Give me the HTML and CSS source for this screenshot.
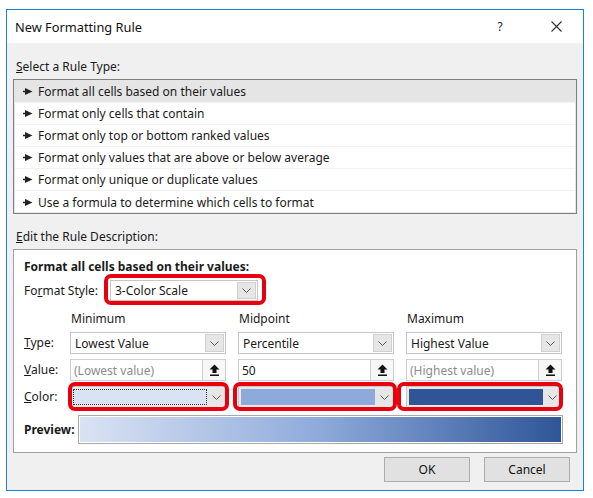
FILE: index.html
```html
<!DOCTYPE html>
<html>
<head>
<meta charset="utf-8">
<link rel="stylesheet" href="styles.css">
</head>
<body>
<div class="dialog">
  <div class="titlebar">
    <span class="title">New Formatting Rule</span>
    <span class="help">?</span>
    <span class="close"><svg width="11" height="11" viewBox="0 0 11 11"><path d="M0.5 0.5 L10.5 10.5 M10.5 0.5 L0.5 10.5" stroke="#333" stroke-width="1.1" fill="none"/></svg></span>
  </div>
  <div class="content">
    <div class="section-label first"><u>S</u>elect a Rule Type:</div>
    <ul class="rule-list">
      <li class="selected"><svg class="ptr" width="10" height="7" viewBox="0 0 10 7"><path d="M0 2.8 H2 V0 L9.5 3.5 L2 7 V4.2 H0 Z" fill="#222"/></svg>Format all cells based on their values</li>
      <li><svg class="ptr" width="10" height="7" viewBox="0 0 10 7"><path d="M0 2.8 H2 V0 L9.5 3.5 L2 7 V4.2 H0 Z" fill="#222"/></svg>Format only cells that contain</li>
      <li><svg class="ptr" width="10" height="7" viewBox="0 0 10 7"><path d="M0 2.8 H2 V0 L9.5 3.5 L2 7 V4.2 H0 Z" fill="#222"/></svg>Format only top or bottom ranked values</li>
      <li><svg class="ptr" width="10" height="7" viewBox="0 0 10 7"><path d="M0 2.8 H2 V0 L9.5 3.5 L2 7 V4.2 H0 Z" fill="#222"/></svg>Format only values that are above or below average</li>
      <li><svg class="ptr" width="10" height="7" viewBox="0 0 10 7"><path d="M0 2.8 H2 V0 L9.5 3.5 L2 7 V4.2 H0 Z" fill="#222"/></svg>Format only unique or duplicate values</li>
      <li><svg class="ptr" width="10" height="7" viewBox="0 0 10 7"><path d="M0 2.8 H2 V0 L9.5 3.5 L2 7 V4.2 H0 Z" fill="#222"/></svg>Use a formula to determine which cells to format</li>
    </ul>
    <div class="section-label second"><u>E</u>dit the Rule Description:</div>
    <div class="desc">
      <div class="desc-title">Format all cells based on their values:</div>
      <div class="style-row">
        <span class="style-label">Fo<u>r</u>mat Style:</span>
        <div class="marked mark-style">
          <div class="combo style-combo">
            <span class="combo-text">3-Color Scale</span>
            <span class="arrow"><svg width="9" height="5" viewBox="0 0 9 5"><path d="M0.5 0.5 L4.5 4.5 L8.5 0.5" stroke="#555" stroke-width="1" fill="none"/></svg></span>
          </div>
        </div>
      </div>
      <div class="grid">
        <span></span>
        <span class="col-head">Minimum</span>
        <span class="col-head">Midpoint</span>
        <span class="col-head">Maximum</span>

        <span class="row-label"><u>T</u>ype:</span>
        <div class="combo"><span class="combo-text">Lowest Value</span><span class="arrow"><svg width="9" height="5" viewBox="0 0 9 5"><path d="M0.5 0.5 L4.5 4.5 L8.5 0.5" stroke="#555" stroke-width="1" fill="none"/></svg></span></div>
        <div class="combo"><span class="combo-text">Percentile</span><span class="arrow"><svg width="9" height="5" viewBox="0 0 9 5"><path d="M0.5 0.5 L4.5 4.5 L8.5 0.5" stroke="#555" stroke-width="1" fill="none"/></svg></span></div>
        <div class="combo"><span class="combo-text">Highest Value</span><span class="arrow"><svg width="9" height="5" viewBox="0 0 9 5"><path d="M0.5 0.5 L4.5 4.5 L8.5 0.5" stroke="#555" stroke-width="1" fill="none"/></svg></span></div>

        <span class="row-label"><u>V</u>alue:</span>
        <div class="input"><span class="input-text muted">(Lowest value)</span><span class="upload"><svg width="11" height="12" viewBox="0 0 11 12"><path d="M5.5 0.5 L10.5 5.5 H7.5 V9 H3.5 V5.5 H0.5 Z" fill="#111"/><rect x="1" y="10.5" width="9" height="1.5" fill="#111"/></svg></span></div>
        <div class="input"><span class="input-text">50</span><span class="upload"><svg width="11" height="12" viewBox="0 0 11 12"><path d="M5.5 0.5 L10.5 5.5 H7.5 V9 H3.5 V5.5 H0.5 Z" fill="#111"/><rect x="1" y="10.5" width="9" height="1.5" fill="#111"/></svg></span></div>
        <div class="input"><span class="input-text muted">(Highest value)</span><span class="upload"><svg width="11" height="12" viewBox="0 0 11 12"><path d="M5.5 0.5 L10.5 5.5 H7.5 V9 H3.5 V5.5 H0.5 Z" fill="#111"/><rect x="1" y="10.5" width="9" height="1.5" fill="#111"/></svg></span></div>

        <span class="row-label"><u>C</u>olor:</span>
        <div class="marked mark-min"><div class="color-combo"><span class="swatch swatch-min"></span><span class="arrow flat"><svg width="9" height="5" viewBox="0 0 9 5"><path d="M0.5 0.5 L4.5 4.5 L8.5 0.5" stroke="#555" stroke-width="1" fill="none"/></svg></span></div></div>
        <div class="marked mark-mid"><div class="color-combo"><span class="swatch swatch-mid"></span><span class="arrow flat"><svg width="9" height="5" viewBox="0 0 9 5"><path d="M0.5 0.5 L4.5 4.5 L8.5 0.5" stroke="#555" stroke-width="1" fill="none"/></svg></span></div></div>
        <div class="marked mark-max"><div class="color-combo"><span class="swatch swatch-max"></span><span class="arrow flat"><svg width="9" height="5" viewBox="0 0 9 5"><path d="M0.5 0.5 L4.5 4.5 L8.5 0.5" stroke="#555" stroke-width="1" fill="none"/></svg></span></div></div>
      </div>
      <div class="preview-row">
        <span class="preview-label">Preview:</span>
        <div class="preview-bar"></div>
      </div>
    </div>
    <div class="buttons">
      <button class="btn">OK</button>
      <button class="btn">Cancel</button>
    </div>
  </div>
</div>
</body>
</html>
```

FILE: styles.css
```css
* { box-sizing: border-box; }
html, body { margin: 0; padding: 0; background: #fff; }
body {
  font-family: "Noto Sans", "Open Sans", sans-serif;
  font-size: 12px;
  color: #1a1a1a;
}
u { text-decoration: underline; text-underline-offset: 1px; }

.dialog {
  margin: 9px 0 0 6px;
  width: 578px;
  height: 482px;
  border: 1px solid #1883d7;
  background: #f0f0f0;
  display: flex;
  flex-direction: column;
}

.titlebar {
  height: 33px;
  flex: none;
  background: #fff;
  display: flex;
  align-items: center;
  padding-left: 8px;
}
.title { font-size: 12.8px; color: #111; }
.help { margin-left: auto; width: 20px; text-align: center; font-size: 12px; color: #222; }
.close { width: 54px; height: 33px; display: flex; align-items: center; justify-content: center; margin-left: 19px; margin-right: 0; }

.content { padding: 0 6px; display: flex; flex-direction: column; }

.section-label { height: 16px; line-height: 16px; padding-left: 3px; }
.section-label.first { margin-top: 16px; margin-bottom: 4px; }
.section-label.second { margin-top: 15px; margin-bottom: 4px; }

.rule-list {
  list-style: none;
  margin: 0;
  padding: 1px 1px 0;
  background: #fff;
  border: 1px solid #7f7f7f;
  box-shadow: inset 0 0 0 1px #e6e6e6;
}
.rule-list li {
  height: 22px;
  display: flex;
  align-items: center;
  padding-left: 8px;
  border-bottom: 1px solid #f2f2f2;
}
.rule-list li:last-child { border-bottom: none; }
.rule-list li.selected { background: #e5e5e5; }
.ptr { margin-right: 5px; flex: none; }

.desc {
  height: 204px;
  background: #fff;
  border: 1px solid #a0a0a0;
  padding: 9px 10px 0 10px;
}
.desc-title { font-weight: bold; height: 16px; line-height: 16px; }

.style-row { display: flex; align-items: center; margin-top: 5px; height: 21px; }
.style-label { width: 86px; }

.marked { position: relative; }
.marked::after {
  content: "";
  position: absolute;
  border: 4px solid #e8000f;
  border-radius: 7px;
  pointer-events: none;
}
.mark-style::after { left: -6px; right: -8px; top: -6px; bottom: -4px; }
.mark-min::after { left: -2px; right: -3px; top: -4px; bottom: -3px; }
.mark-mid::after { left: -5px; right: -3px; top: -4px; bottom: -3px; }
.mark-max::after { left: -9px; right: -1px; top: -4px; bottom: -3px; }

.combo {
  height: 22px;
  border: 1px solid #c6c6c6;
  background: #fff;
  display: flex;
  align-items: center;
  padding: 1px;
}
.style-combo { width: 148px; height: 21px; }
.combo-text { flex: 1; padding-left: 3px; white-space: nowrap; }
.arrow {
  width: 19px;
  height: 100%;
  background: #e6e6e6;
  border: 1px solid #d0d0d0;
  display: flex;
  align-items: center;
  justify-content: center;
  flex: none;
}
.arrow.flat { border: none; width: 18px; }

.grid {
  display: grid;
  grid-template-columns: 34px 156px 156px 156px;
  grid-template-rows: 16px 22px 22px 22px;
  column-gap: 12px;
  row-gap: 5px;
  margin-top: 10px;
  align-items: center;
}
.col-head { line-height: 16px; padding-left: 1px; }
.row-label { line-height: 16px; }

.input {
  height: 22px;
  border: 1px solid #cfcfcf;
  background: #fff;
  display: flex;
  align-items: center;
}
.input-text { flex: 1; padding-left: 3px; }
.muted { color: #8c8c8c; }
.upload {
  width: 23px;
  height: 100%;
  border-left: 1px solid #cfcfcf;
  background: #f7f7f7;
  display: flex;
  align-items: center;
  justify-content: center;
}

.color-combo {
  height: 22px;
  background: #e9e9e9;
  border: 1px solid #c6c6c6;
  display: flex;
  align-items: center;
  padding: 2px 0 2px 2px;
}
.swatch { flex: 1; height: 100%; }
.swatch-min { background: #dae3f3; border: 1px dotted #333; }
.swatch-mid { background: #8eaadb; }
.swatch-max { background: #2f5597; }

.preview-row { display: flex; align-items: center; margin-top: 7px; height: 29px; }
.preview-label { width: 54px; font-weight: bold; }
.preview-bar {
  width: 485px;
  height: 29px;
  border: 1px solid #a8a8a8;
  box-shadow: inset 0 0 0 1px #fff;
  background: linear-gradient(to right, #dae3f3, #8eaadb, #2f5597);
}

.buttons { display: flex; justify-content: flex-end; gap: 14px; margin-top: 4px; padding-right: 7px; }
.btn {
  width: 86px;
  height: 25px;
  background: #e1e1e1;
  border: 1px solid #adadad;
  font-family: inherit;
  font-size: 12px;
  color: #111;
  padding: 0;
}
```
